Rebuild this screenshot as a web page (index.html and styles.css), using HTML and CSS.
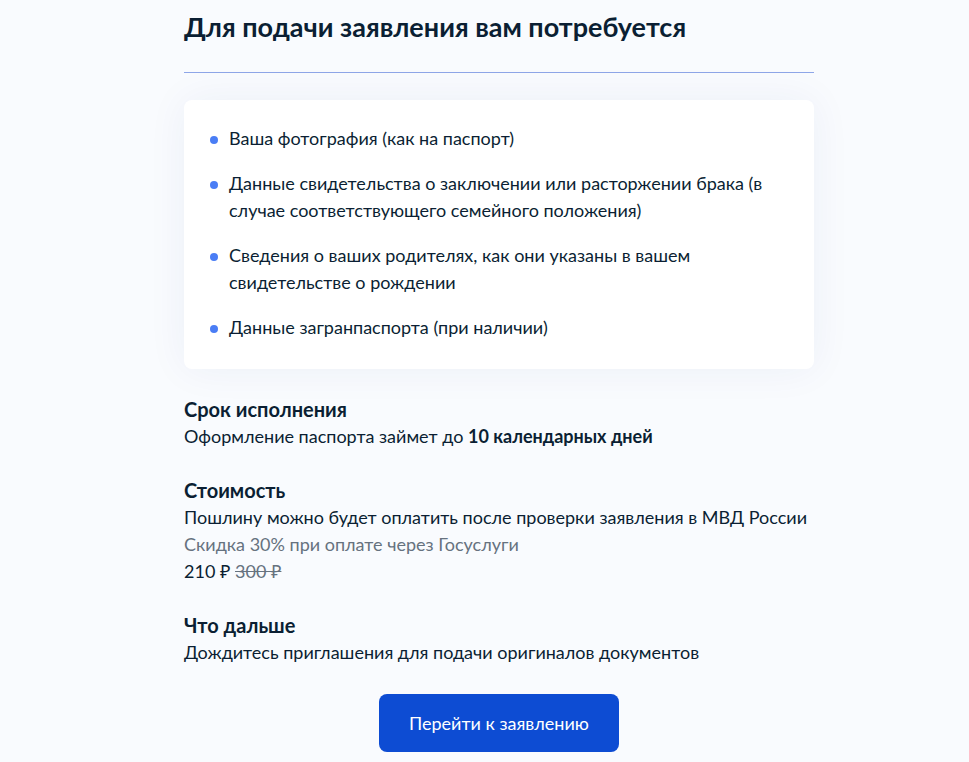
FILE: index.html
```html
<!DOCTYPE html>
<html lang="ru">
<head>
<meta charset="utf-8">
<link rel="stylesheet" href="styles.css">
</head>
<body>
<main class="page">
  <h2 class="title">Для подачи заявления вам потребуется</h2>
  <div class="divider"></div>
  <div class="card">
    <ul class="list">
      <li>Ваша фотография (как на паспорт)</li>
      <li>Данные свидетельства о заключении или расторжении брака (в случае соответствующего семейного положения)</li>
      <li>Сведения о ваших родителях, как они указаны в вашем свидетельстве о рождении</li>
      <li>Данные загранпаспорта (при наличии)</li>
    </ul>
  </div>
  <section class="info">
    <h3 class="info-title">Срок исполнения</h3>
    <p class="text">Оформление паспорта займет до <b>10 календарных дней</b></p>
  </section>
  <section class="info">
    <h3 class="info-title">Стоимость</h3>
    <p class="text">Пошлину можно будет оплатить после проверки заявления в МВД России</p>
    <p class="text muted">Скидка 30% при оплате через Госуслуги</p>
    <p class="text">210 ₽ <s class="old">300 ₽</s></p>
  </section>
  <section class="info">
    <h3 class="info-title">Что дальше</h3>
    <p class="text">Дождитесь приглашения для подачи оригиналов документов</p>
  </section>
  <div class="actions">
    <button class="btn">Перейти к заявлению</button>
  </div>
</main>
</body>
</html>
```

FILE: styles.css
```css
* { box-sizing: border-box; }
html, body {
  margin: 0;
  padding: 0;
  background: #f9fbfe;
}
body {
  font-family: Lato, "Noto Sans", sans-serif;
  color: #0b1f33;
  font-size: 18px;
  line-height: 27px;
}
.page {
  width: 630px;
  margin-left: 184px;
  padding-top: 9px;
}
.title {
  margin: 0;
  font-size: 27px;
  line-height: 36px;
  font-weight: 700;
}
.divider {
  height: 1px;
  background: #8ea6e8;
  margin: 27px 0 27px;
}
.card {
  background: #fff;
  border-radius: 8px;
  box-shadow: 0 0 40px rgba(0, 50, 140, 0.06);
  padding: 25px 30px 28px 28px;
}
.list {
  list-style: none;
  margin: 0;
  padding: 0;
}
.list li {
  position: relative;
  padding-left: 17px;
  margin-bottom: 18px;
}
.list li:last-child { margin-bottom: 0; }
.list li::before {
  content: "";
  position: absolute;
  left: -2px;
  top: 11px;
  width: 8px;
  height: 8px;
  border-radius: 50%;
  background: #4a7df5;
}
.info { margin-top: 27px; }
.info-title {
  margin: 0;
  font-size: 20px;
  line-height: 27px;
  font-weight: 700;
}
.text {
  margin: 0;
}
.text b { font-weight: 700; }
.muted { color: #66727f; }
.old { color: #66727f; }
.actions {
  display: flex;
  justify-content: center;
  margin-top: 28px;
}
.btn {
  height: 58px;
  padding: 0 30px;
  border: 0;
  border-radius: 8px;
  background: #0d4cd3;
  color: #fff;
  font-family: Lato, "Noto Sans", sans-serif;
  font-size: 18px;
  font-weight: 400;
}
```
